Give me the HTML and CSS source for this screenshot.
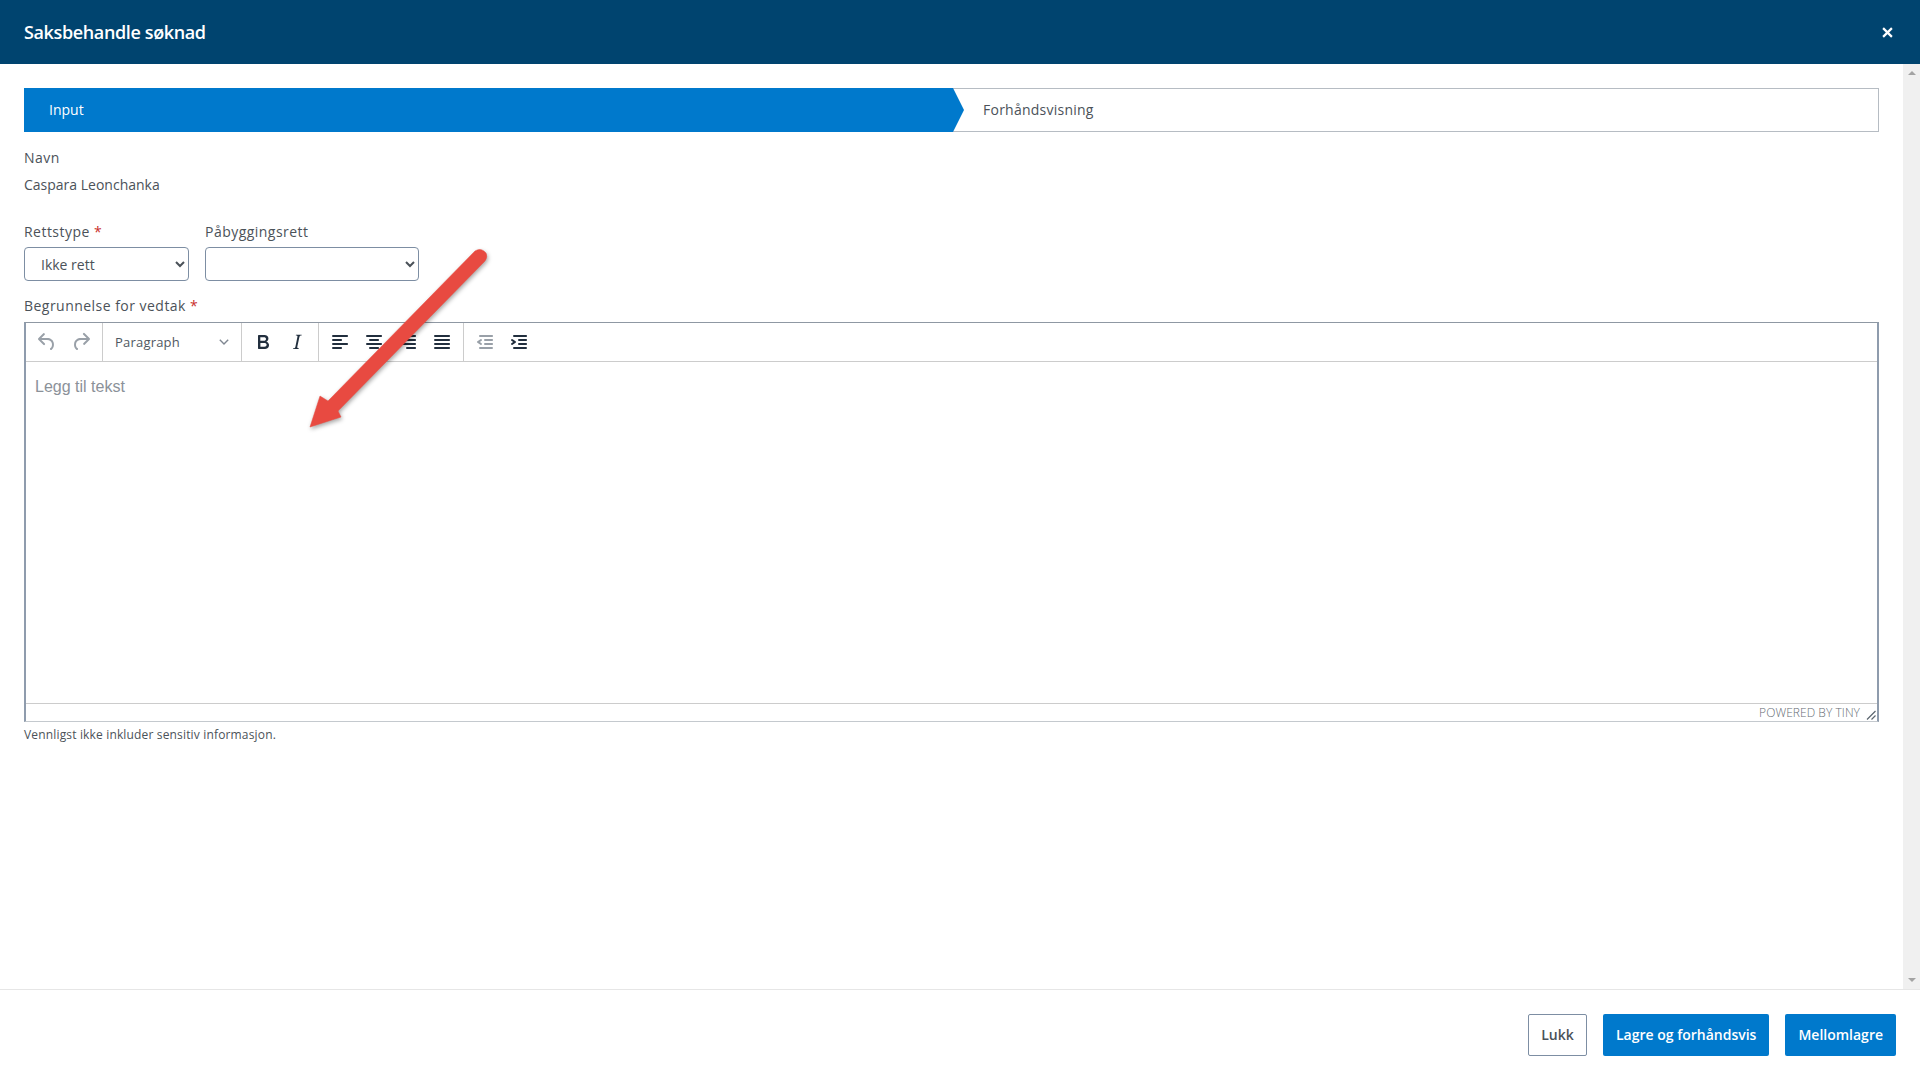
FILE: index.html
```html
<!DOCTYPE html>
<html lang="no">
<head>
<meta charset="utf-8">
<title>Saksbehandle søknad</title>
<link rel="stylesheet" href="styles.css">
</head>
<body>
<div class="modal">
  <header class="modal-header">
    <h1 class="modal-title">Saksbehandle søknad</h1>
    <svg class="close-icon" viewBox="0 0 10 10"><path d="M1 1l8 8M9 1L1 9"/></svg>
  </header>
  <div class="modal-main">
    <main class="content">
      <div class="stepper">
        <div class="step step-active">Input</div>
        <div class="step">Forhåndsvisning</div>
      </div>
      <div class="label label-name">Navn</div>
      <div class="value">Caspara Leonchanka</div>
      <div class="select-row">
        <div class="field field-type">
          <label class="label">Rettstype <span class="req">*</span></label>
          <select class="select"><option>Ikke rett</option></select>
        </div>
        <div class="field field-ext">
          <label class="label">Påbyggingsrett</label>
          <select class="select"><option></option></select>
        </div>
      </div>
      <label class="label label-editor">Begrunnelse for vedtak <span class="req">*</span></label>
      <div class="editor">
        <div class="toolbar">
          <div class="tgroup tgroup-history">
            <span class="tbtn tbtn-off"><svg viewBox="0 0 24 24"><path d="M6.4 8H12c3.7 0 6.2 2 6.8 5.1.6 2.7-.4 5.6-2.3 6.8a1 1 0 01-1-1.8c1.1-.6 1.8-2.7 1.4-4.6-.5-2.1-2.1-3.5-4.9-3.5H6.4l3.3 3.3a1 1 0 11-1.4 1.4l-5-5a1 1 0 010-1.4l5-5a1 1 0 011.4 1.4L6.4 8z"/></svg></span>
            <span class="tbtn tbtn-off"><svg viewBox="0 0 24 24"><path d="M17.6 10H12c-2.8 0-4.4 1.4-4.9 3.5-.4 2 .3 4 1.4 4.6a1 1 0 11-1 1.8c-2-1.2-2.9-4.1-2.3-6.8.6-3 3-5.1 6.8-5.1h5.6l-3.3-3.3a1 1 0 111.4-1.4l5 5a1 1 0 010 1.4l-5 5a1 1 0 01-1.4-1.4l3.3-3.3z"/></svg></span>
          </div>
          <div class="tgroup tgroup-format">
            <span class="format-name">Paragraph</span>
            <svg class="format-chevron" viewBox="0 0 10 6"><path d="M.8.8L5 5l4.2-4.2"/></svg>
          </div>
          <div class="tgroup">
            <span class="tbtn"><svg viewBox="0 0 24 24"><path d="M7.8 19c-.3 0-.5 0-.6-.2l-.2-.5V5.7c0-.2 0-.4.2-.5l.6-.2h5c1.5 0 2.7.3 3.5 1 .7.6 1.1 1.4 1.1 2.5a3 3 0 01-.6 1.9c-.4.6-1 1-1.6 1.2.4.1.9.3 1.3.6s.8.7 1 1.2c.4.4.5 1 .5 1.6 0 1.3-.4 2.3-1.3 3-.8.7-2.1 1-3.8 1H7.8zm5-8.3c.6 0 1.2-.1 1.6-.5.4-.3.6-.7.6-1.3 0-1.1-.8-1.7-2.3-1.7H9.3v3.5h3.4zm.5 6c.7 0 1.3-.1 1.7-.4.4-.4.6-.9.6-1.5s-.2-1-.7-1.4c-.4-.3-1-.4-2-.4H9.4v3.8h4z"/></svg></span>
            <span class="tbtn"><svg viewBox="0 0 24 24"><path d="M16.7 4.7l-.1.9h-.3c-.6 0-1 0-1.4.3-.3.3-.4.6-.5 1.1l-2.1 9.8v.6c0 .5.4.8 1.4.8h.2l-.2.8H8l.2-.8h.2c1.1 0 1.8-.5 2-1.5l2-9.8.1-.5c0-.6-.4-.8-1.4-.8h-.3l.2-.9h5.8z"/></svg></span>
          </div>
          <div class="tgroup">
            <span class="tbtn"><svg viewBox="0 0 24 24"><path d="M5 5h14c.6 0 1 .4 1 1s-.4 1-1 1H5a1 1 0 110-2zm0 4h8c.6 0 1 .4 1 1s-.4 1-1 1H5a1 1 0 110-2zm0 8h8c.6 0 1 .4 1 1s-.4 1-1 1H5a1 1 0 010-2zm0-4h14c.6 0 1 .4 1 1s-.4 1-1 1H5a1 1 0 010-2z"/></svg></span>
            <span class="tbtn"><svg viewBox="0 0 24 24"><path d="M5 5h14c.6 0 1 .4 1 1s-.4 1-1 1H5a1 1 0 110-2zm3 4h8c.6 0 1 .4 1 1s-.4 1-1 1H8a1 1 0 110-2zm0 8h8c.6 0 1 .4 1 1s-.4 1-1 1H8a1 1 0 010-2zm-3-4h14c.6 0 1 .4 1 1s-.4 1-1 1H5a1 1 0 010-2z"/></svg></span>
            <span class="tbtn"><svg viewBox="0 0 24 24"><path d="M5 5h14c.6 0 1 .4 1 1s-.4 1-1 1H5a1 1 0 110-2zm6 4h8c.6 0 1 .4 1 1s-.4 1-1 1h-8a1 1 0 010-2zm0 8h8c.6 0 1 .4 1 1s-.4 1-1 1h-8a1 1 0 010-2zm-6-4h14c.6 0 1 .4 1 1s-.4 1-1 1H5a1 1 0 010-2z"/></svg></span>
            <span class="tbtn"><svg viewBox="0 0 24 24"><path d="M5 5h14c.6 0 1 .4 1 1s-.4 1-1 1H5a1 1 0 110-2zm0 4h14c.6 0 1 .4 1 1s-.4 1-1 1H5a1 1 0 110-2zm0 4h14c.6 0 1 .4 1 1s-.4 1-1 1H5a1 1 0 010-2zm0 4h14c.6 0 1 .4 1 1s-.4 1-1 1H5a1 1 0 010-2z"/></svg></span>
          </div>
          <div class="tgroup tgroup-last">
            <span class="tbtn tbtn-off"><svg viewBox="0 0 24 24"><path d="M7 5h12c.6 0 1 .4 1 1s-.4 1-1 1H7a1 1 0 110-2zm5 4h7c.6 0 1 .4 1 1s-.4 1-1 1h-7a1 1 0 010-2zm0 4h7c.6 0 1 .4 1 1s-.4 1-1 1h-7a1 1 0 010-2zm-5 4h12a1 1 0 010 2H7a1 1 0 010-2zm1.6-3.8a1 1 0 01-1.2 1.6l-3-2a1 1 0 010-1.6l3-2a1 1 0 011.2 1.6L6.8 12l1.8 1.2z"/></svg></span>
            <span class="tbtn"><svg viewBox="0 0 24 24"><path d="M7 5h12c.6 0 1 .4 1 1s-.4 1-1 1H7a1 1 0 110-2zm5 4h7c.6 0 1 .4 1 1s-.4 1-1 1h-7a1 1 0 010-2zm0 4h7c.6 0 1 .4 1 1s-.4 1-1 1h-7a1 1 0 010-2zm-5 4h12a1 1 0 010 2H7a1 1 0 010-2zm-2.6-3.8L6.2 12l-1.8-1.2a1 1 0 011.2-1.6l3 2a1 1 0 010 1.6l-3 2a1 1 0 11-1.2-1.6z"/></svg></span>
          </div>
        </div>
        <div class="editor-body">Legg til tekst</div>
        <div class="statusbar">
          <span class="branding">POWERED BY TINY</span>
          <svg class="resize" viewBox="0 0 10 10"><path d="M1 9.5L9.5 1M5.5 9.5l4-4"/></svg>
        </div>
      </div>
      <p class="help">Vennligst ikke inkluder sensitiv informasjon.</p>
    </main>
    <div class="scrollbar">
      <span class="scroll-up"></span>
      <span class="scroll-down"></span>
    </div>
  </div>
  <footer class="modal-footer">
    <button class="btn btn-outline">Lukk</button>
    <button class="btn btn-primary">Lagre og forhåndsvis</button>
    <button class="btn btn-primary">Mellomlagre</button>
  </footer>
  <svg class="annotation" viewBox="0 0 200 200">
    <path class="annotation-arrow" d="M175 6Q181 2 186 8Q188 12 185 16L38 166L41 172L10 182L20 151L28 156Z"/>
  </svg>
</div>
</body>
</html>
```

FILE: styles.css
```css
* { box-sizing: border-box; }
html, body { margin: 0; height: 100%; }
body { font-family: "Open Sans", "Noto Sans", sans-serif; font-size: 14px; color: #4b5259; background: #fff; overflow: hidden; }

.modal { position: relative; display: flex; flex-direction: column; height: 1080px; }

.modal-header { flex: none; height: 64px; background: #00446f; color: #fff; display: flex; align-items: center; justify-content: space-between; padding: 0 27px 0 24px; }
.modal-title { margin: 0; font-size: 18px; font-weight: 600; line-height: 64px; letter-spacing: -.37px; }
.close-icon { width: 11px; height: 11px; fill: none; stroke: #fff; stroke-width: 2; }

.modal-main { flex: 1; min-height: 0; display: flex; }
.content { flex: 1; min-width: 0; padding: 24px 24px 0; }

.scrollbar { flex: none; width: 17px; background: #f0f0f0; display: flex; flex-direction: column; justify-content: space-between; align-items: center; padding: 7px 0; }
.scroll-up { width: 0; height: 0; border: 4px solid transparent; border-top: 0; border-bottom: 4px solid #a3a3a3; }
.scroll-down { width: 0; height: 0; border: 4px solid transparent; border-bottom: 0; border-top: 4px solid #a3a3a3; }

.stepper { display: flex; height: 44px; border: 1px solid #b6bcc3; }
.step { display: flex; align-items: center; padding-left: 19px; line-height: 20px; letter-spacing: .24px; }
.step-active { flex: none; width: 940px; margin: -1px 0 -1px -1px; padding-left: 25px; background: #0079cc; color: #fff; font-weight: 500; letter-spacing: 0; clip-path: polygon(0 0, 929px 0, 100% 50%, 929px 100%, 0 100%); }

.label { display: block; line-height: 20px; letter-spacing: .47px; }
.label-name { margin-top: 16px; }
.value { margin-top: 7px; line-height: 20px; }
.req { color: #c9302c; }

.select-row { display: flex; gap: 16px; margin-top: 27px; }
.field-type { width: 165px; }
.field-ext { width: 214px; }
.select { display: block; width: 100%; height: 34px; margin-top: 5px; padding: 0 12px; font: inherit; color: #4b5259; background: #fff; border: 1px solid #7d8ea3; border-radius: 4px; }

.label-editor { margin-top: 15px; }

.editor { margin-top: 6px; height: 400px; display: flex; flex-direction: column; border: 1px solid #c4c9ce; border-top: 1px solid #8f98a3; border-left: 2px solid #8f9cad; border-right: 2px solid #8f9cad; }
.toolbar { flex: none; height: 39px; display: flex; border-bottom: 1px solid #cccccc; }
.tgroup { display: flex; align-items: center; padding: 0 4px; border-right: 1px solid #cccccc; }
.tgroup-history { width: 77px; }
.tgroup-format { width: 139px; padding: 0 12px; justify-content: space-between; }
.tgroup-last { border-right: 0; }
.tbtn { width: 34px; height: 24px; margin-bottom: 1px; display: flex; justify-content: center; }
.tbtn svg { width: 24px; height: 24px; fill: #222f3e; }
.tbtn-off svg { fill: #99a0a8; }
.format-name { font-size: 13px; color: #4f5862; letter-spacing: .2px; }
.format-chevron { width: 10px; height: 6px; fill: none; stroke: #7f8791; stroke-width: 1.4; }

.editor-body { flex: 1; padding: 15px 9px; font-family: "Liberation Sans", Arial, sans-serif; font-size: 16px; line-height: 20px; color: #8b9199; }

.statusbar { flex: none; height: 18px; display: flex; align-items: flex-start; justify-content: flex-end; gap: 6px; padding-right: 1px; border-top: 1px solid #ccc; }
.branding { font-size: 12px; font-weight: 300; line-height: 17px; letter-spacing: .05px; color: #666d75; }
.resize { width: 10px; height: 10px; margin-top: 6px; fill: none; stroke: #5c6670; stroke-width: 1.2; }

.help { margin: 4px 0 0; font-size: 12px; line-height: 18px; letter-spacing: .16px; }

.modal-footer { flex: none; height: 91px; border-top: 1px solid #e6e6e6; display: flex; justify-content: flex-end; gap: 16px; padding: 24px 24px 0 0; }
.btn { height: 42px; padding: 0 13px 2px; font: 600 14px "Open Sans", sans-serif; border-radius: 2px; }
.btn-outline { width: 59px; padding: 0 0 2px; background: #fff; color: #4b5259; border: 1px solid #7d8ea3; }
.btn-primary { background: #0079cc; color: #fff; border: 0; }

.annotation { position: absolute; left: 300px; top: 245px; width: 200px; height: 200px; pointer-events: none; filter: drop-shadow(1px 2px 2px rgba(0,0,0,.35)); }
.annotation-arrow { fill: #e84a41; stroke: #e84a41; stroke-width: .5; stroke-linejoin: round; }
```
